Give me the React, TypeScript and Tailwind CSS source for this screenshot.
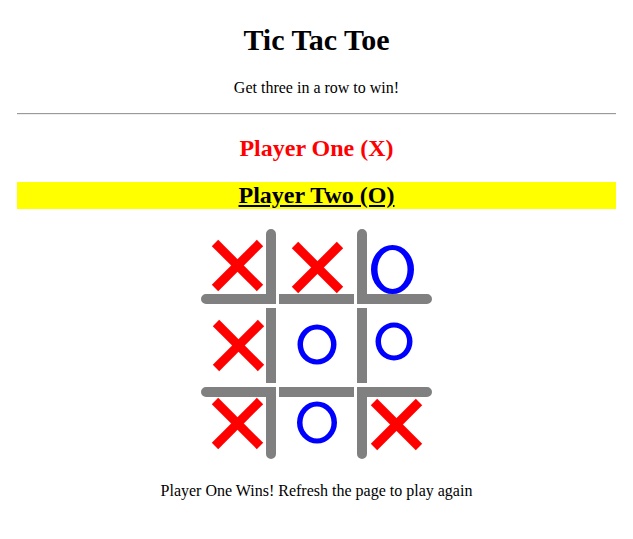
type Line = { d: string; round?: boolean };
type Mark =
  | { kind: "x"; l: number; t: number }
  | { kind: "o"; cx: number; cy: number; rx: number; ry: number; side: number; top: number };

type Cell = { h: number; lines: Line[]; mark?: Mark };

const GRAY = "#808080";

function ring(cx: number, cy: number, rx: number, ry: number) {
  return `M${cx - rx} ${cy}a${rx} ${ry} 0 1 0 ${2 * rx} 0a${rx} ${ry} 0 1 0 ${-2 * rx} 0Z`;
}

const cells: Cell[] = [
  { h: 75, lines: [{ d: "M70 5V70H5", round: true }], mark: { kind: "x", l: 11, t: 11 } },
  { h: 75, lines: [{ d: "M0 70H75" }], mark: { kind: "x", l: 13, t: 13 } },
  {
    h: 75,
    lines: [{ d: "M5 5V70H70", round: true }],
    mark: { kind: "o", cx: 35.5, cy: 40.5, rx: 21.5, ry: 24.5, side: 6.5, top: 5 },
  },
  { h: 75, lines: [{ d: "M70 0V75" }], mark: { kind: "x", l: 12, t: 12 } },
  { h: 75, lines: [], mark: { kind: "o", cx: 38, cy: 36.5, rx: 19.5, ry: 20, side: 5.5, top: 5 } },
  { h: 75, lines: [{ d: "M5 0V75" }], mark: { kind: "o", cx: 37, cy: 33.5, rx: 18.5, ry: 19, side: 5.5, top: 5 } },
  { h: 72, lines: [{ d: "M5 5H70V67", round: true }], mark: { kind: "x", l: 11, t: 11 } },
  { h: 72, lines: [{ d: "M0 5H75" }], mark: { kind: "o", cx: 38, cy: 35.5, rx: 20, ry: 21, side: 5.5, top: 5 } },
  { h: 72, lines: [{ d: "M70 5H5V67", round: true }], mark: { kind: "x", l: 14, t: 12 } },
];

function BoardCell({ cell }: { cell: Cell }) {
  const m = cell.mark;
  return (
    <svg width={75} height={cell.h} viewBox={`0 0 75 ${cell.h}`} className="block">
      {cell.lines.map((ln, i) => (
        <path
          key={i}
          d={ln.d}
          fill="none"
          stroke={GRAY}
          strokeWidth={10}
          strokeLinecap={ln.round ? "round" : "butt"}
          strokeLinejoin="miter"
        />
      ))}
      {m && m.kind === "x" && (
        <g stroke="#ff0000" strokeWidth={9} strokeLinecap="butt">
          <line x1={m.l + 3} y1={m.t + 3} x2={m.l + 48} y2={m.t + 48} />
          <line x1={m.l + 48} y1={m.t + 3} x2={m.l + 3} y2={m.t + 48} />
        </g>
      )}
      {m && m.kind === "o" && (
        <path
          d={ring(m.cx, m.cy, m.rx, m.ry) + ring(m.cx, m.cy, m.rx - m.side, m.ry - m.top)}
          fill="#0000ff"
          fillRule="evenodd"
        />
      )}
    </svg>
  );
}

export default function App() {
  return (
    <div className="min-h-screen bg-white text-black font-['Liberation_Serif',serif] leading-[normal] text-center flex flex-col px-[17px]">
      <h1 className="mt-[23px] text-[30px] font-bold">Tic Tac Toe</h1>
      <p className="mt-[22px] text-[16px]">Get three in a row to win!</p>
      <hr className="mt-[16px] h-[2px] border-0 border-t border-b border-t-[#9a9a9a] border-b-[#eeeeee]" />
      <h2 className="mt-[20px] text-[24px] font-bold text-[#ff0000]">Player One (X)</h2>
      <h2 className="mt-[20px] text-[24px] font-bold bg-[#ffff00] underline">Player Two (O)</h2>
      <div className="mt-[20px] mx-auto grid grid-cols-[75px_75px_75px] gap-x-[3px] gap-y-[4px]">
        {cells.map((c, i) => (
          <BoardCell key={i} cell={c} />
        ))}
      </div>
      <p className="mt-[23px] text-[16px]">Player One Wins! Refresh the page to play again</p>
    </div>
  );
}
